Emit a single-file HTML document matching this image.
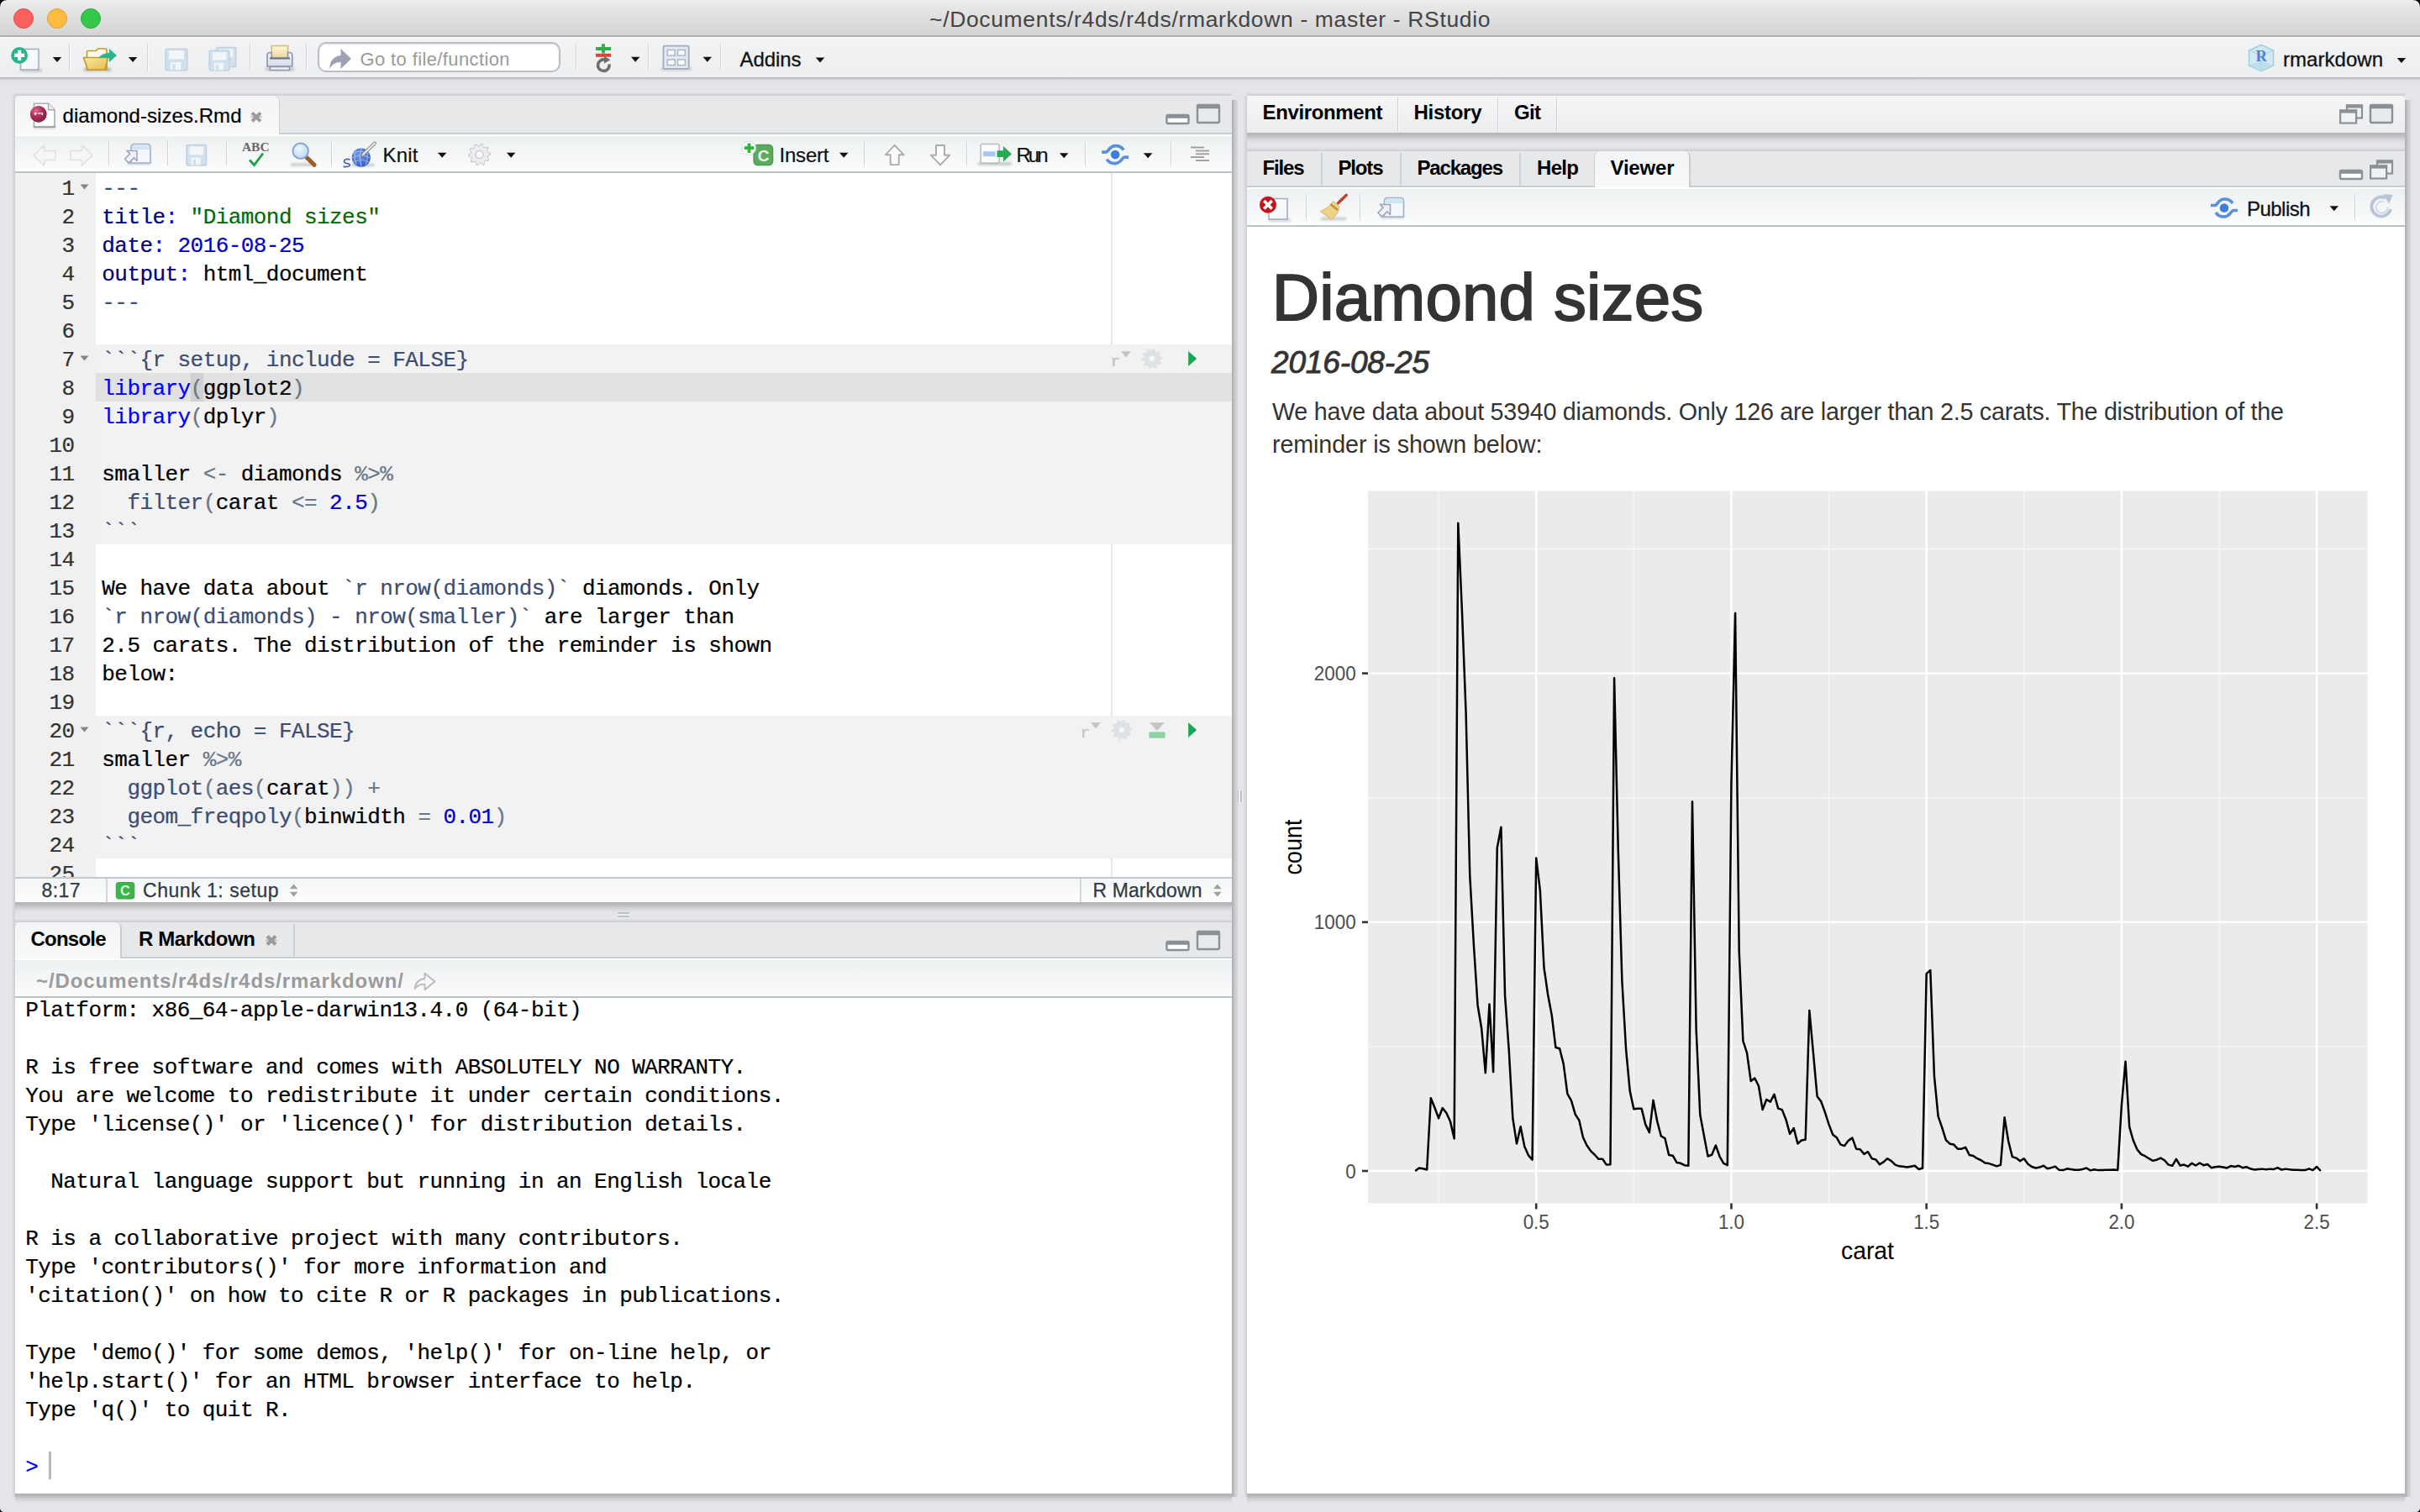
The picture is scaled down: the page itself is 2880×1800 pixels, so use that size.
<!DOCTYPE html>
<html><head><meta charset="utf-8"><title>RStudio</title>
<style>
html,body{margin:0;padding:0}
body{width:2880px;height:1800px;position:relative;overflow:hidden;background:#e4e5e9;font-family:"Liberation Sans",sans-serif;}
</style></head><body>
<div style="position:absolute;left:0px;top:0px;width:2880px;height:44px;background:linear-gradient(#ececec,#d3d3d3);border-bottom:2px solid #adadad;box-sizing:border-box;"></div>
<div style="position:absolute;left:16px;top:10px;width:24px;height:24px;border-radius:50%;background:#fc615d;border:1px solid #df4744;box-sizing:border-box;"></div>
<div style="position:absolute;left:56px;top:10px;width:24px;height:24px;border-radius:50%;background:#fdbc40;border:1px solid #de9f34;box-sizing:border-box;"></div>
<div style="position:absolute;left:96px;top:10px;width:24px;height:24px;border-radius:50%;background:#34c84a;border:1px solid #27aa35;box-sizing:border-box;"></div>
<div style="position:absolute;left:1106.00px;top:9.87px;font-family:'Liberation Sans', sans-serif;font-size:26.50px;line-height:1;color:#444;white-space:pre;letter-spacing:0.653px;">~/Documents/r4ds/r4ds/rmarkdown - master - RStudio</div>
<div style="position:absolute;left:0px;top:44px;width:2880px;height:48px;background:linear-gradient(#fafafa 0,#f1f3f4 2px,#eceeef 100%);"></div>
<div style="position:absolute;left:0px;top:92px;width:2880px;height:6px;background:linear-gradient(#b6b7ba 0,#bebfc2 20%,#d0d1d5 36%,#dadbdf 55%,#e1e2e6 80%,#e4e5e9 100%);"></div>
<div style="position:absolute;left:82px;top:52px;width:1px;height:32px;background:#d2d4d7;"></div>
<div style="position:absolute;left:83px;top:52px;width:1px;height:32px;background:#fbfbfc;"></div>
<div style="position:absolute;left:175px;top:52px;width:1px;height:32px;background:#d2d4d7;"></div>
<div style="position:absolute;left:176px;top:52px;width:1px;height:32px;background:#fbfbfc;"></div>
<div style="position:absolute;left:297px;top:52px;width:1px;height:32px;background:#d2d4d7;"></div>
<div style="position:absolute;left:298px;top:52px;width:1px;height:32px;background:#fbfbfc;"></div>
<div style="position:absolute;left:364px;top:52px;width:1px;height:32px;background:#d2d4d7;"></div>
<div style="position:absolute;left:365px;top:52px;width:1px;height:32px;background:#fbfbfc;"></div>
<div style="position:absolute;left:685px;top:52px;width:1px;height:32px;background:#d2d4d7;"></div>
<div style="position:absolute;left:686px;top:52px;width:1px;height:32px;background:#fbfbfc;"></div>
<div style="position:absolute;left:771px;top:52px;width:1px;height:32px;background:#d2d4d7;"></div>
<div style="position:absolute;left:772px;top:52px;width:1px;height:32px;background:#fbfbfc;"></div>
<div style="position:absolute;left:857px;top:52px;width:1px;height:32px;background:#d2d4d7;"></div>
<div style="position:absolute;left:858px;top:52px;width:1px;height:32px;background:#fbfbfc;"></div>
<div style="position:absolute;left:378px;top:50px;width:289px;height:36px;background:#fff;border:2px solid #babec6;border-radius:10px;box-sizing:border-box;box-shadow:inset 0 1px 2px rgba(0,0,0,.12);"></div>
<div style="position:absolute;left:428.50px;top:59.68px;font-family:'Liberation Sans', sans-serif;font-size:22.00px;line-height:1;color:#9a9a9a;white-space:pre;letter-spacing:0.377px;">Go to file/function</div>
<div style="position:absolute;left:1466px;top:119px;width:6.5px;height:1663px;background:linear-gradient(to right,#aeafb2 0,#bcbdc0 38%,#cbccd0 46%,#d3d4d8 92%,#e4e5e9 100%);"></div>
<div style="position:absolute;left:2862px;top:119px;width:6.5px;height:1663px;background:linear-gradient(to right,#aeafb2 0,#bcbdc0 38%,#cbccd0 46%,#d3d4d8 92%,#e4e5e9 100%);"></div>
<div style="position:absolute;left:14px;top:114px;width:4px;height:1668px;background:linear-gradient(to left,#cdced1 0,#d9dade 60%,#e4e5e9 100%);"></div>
<div style="position:absolute;left:1480px;top:114px;width:4px;height:1668px;background:linear-gradient(to left,#cdced1 0,#d9dade 60%,#e4e5e9 100%);"></div>
<div style="position:absolute;left:735px;top:1086px;width:14px;height:2px;background:#bec2cc;box-shadow:0 0 0 1px rgba(240,241,244,.6);"></div>
<div style="position:absolute;left:735px;top:1090px;width:14px;height:2px;background:#bec2cc;box-shadow:0 0 0 1px rgba(240,241,244,.6);"></div>
<div style="position:absolute;left:1472px;top:941px;width:2px;height:14px;background:#bec2cc;box-shadow:0 0 0 1px rgba(240,241,244,.6);"></div>
<div style="position:absolute;left:1476px;top:941px;width:2px;height:14px;background:#bec2cc;box-shadow:0 0 0 1px rgba(240,241,244,.6);"></div>
<div style="position:absolute;left:880.50px;top:58.98px;font-family:'Liberation Sans', sans-serif;font-size:24.00px;line-height:1;color:#111;white-space:pre;letter-spacing:-0.077px;-webkit-text-stroke:0.3px #111;">Addins</div>
<div style="position:absolute;left:2717.00px;top:58.98px;font-family:'Liberation Sans', sans-serif;font-size:24.00px;line-height:1;color:#111;white-space:pre;letter-spacing:0.037px;-webkit-text-stroke:0.3px #111;">rmarkdown</div>
<div style="position:absolute;left:1466px;top:119px;width:6.5px;height:955px;background:linear-gradient(to right,#aeafb2 0,#bcbdc0 38%,#cbccd0 46%,#d3d4d8 92%,#e4e5e9 100%);"></div>
<div style="position:absolute;left:18px;top:1074px;width:1448px;height:12px;background:linear-gradient(to bottom,#b2b2b4 0,#bbbcbe 28%,#cbccd0 48%,#d8d9dd 72%,#e4e5e9 100%);"></div>
<div style="position:absolute;left:14px;top:114px;width:4px;height:960px;background:linear-gradient(to left,#cdced1 0,#d9dade 60%,#e4e5e9 100%);"></div>
<div style="position:absolute;left:18px;top:110px;width:1448px;height:4px;background:linear-gradient(to top,#cbccd0 0,#d8d9dd 55%,#e4e5e9 100%);"></div>
<div style="position:absolute;left:18px;top:114px;width:1448px;height:960px;background:#fff;border-radius:6px 0 0 0;"></div>
<div style="position:absolute;left:18px;top:114px;width:1448px;height:46px;background:#e7e8ea;border-bottom:2px solid #c7cdd1;box-sizing:border-box;border-radius:6px 0 0 0;"></div>
<div style="position:absolute;left:18px;top:114px;width:315px;height:47px;background:linear-gradient(#f3f4f5,#f9f9fa);border-right:1px solid #c9ccd0;border-radius:7px 7px 0 0;box-sizing:border-box;"></div>
<div style="position:absolute;left:74.50px;top:126.18px;font-family:'Liberation Sans', sans-serif;font-size:24.00px;line-height:1;color:#000;white-space:pre;letter-spacing:0.058px;-webkit-text-stroke:0.22px #000;">diamond-sizes.Rmd</div>
<div style="position:absolute;left:18px;top:160px;width:1448px;height:44px;background:linear-gradient(#fff 0,#fff 2px,#edf0f1 2px,#f3f5f6 45%,#fbfcfc 100%);"></div>
<div style="position:absolute;left:18px;top:204px;width:1448px;height:2px;background:#bcc3c7;"></div>
<div style="position:absolute;left:129px;top:167px;width:1px;height:30px;background:#d0d3d6;"></div><div style="position:absolute;left:130px;top:167px;width:1px;height:30px;background:#fdfdfd;"></div>
<div style="position:absolute;left:199px;top:167px;width:1px;height:30px;background:#d0d3d6;"></div><div style="position:absolute;left:200px;top:167px;width:1px;height:30px;background:#fdfdfd;"></div>
<div style="position:absolute;left:269px;top:167px;width:1px;height:30px;background:#d0d3d6;"></div><div style="position:absolute;left:270px;top:167px;width:1px;height:30px;background:#fdfdfd;"></div>
<div style="position:absolute;left:394px;top:167px;width:1px;height:30px;background:#d0d3d6;"></div><div style="position:absolute;left:395px;top:167px;width:1px;height:30px;background:#fdfdfd;"></div>
<div style="position:absolute;left:1028px;top:167px;width:1px;height:30px;background:#d0d3d6;"></div><div style="position:absolute;left:1029px;top:167px;width:1px;height:30px;background:#fdfdfd;"></div>
<div style="position:absolute;left:1150px;top:167px;width:1px;height:30px;background:#d0d3d6;"></div><div style="position:absolute;left:1151px;top:167px;width:1px;height:30px;background:#fdfdfd;"></div>
<div style="position:absolute;left:1291px;top:167px;width:1px;height:30px;background:#d0d3d6;"></div><div style="position:absolute;left:1292px;top:167px;width:1px;height:30px;background:#fdfdfd;"></div>
<div style="position:absolute;left:1393px;top:167px;width:1px;height:30px;background:#d0d3d6;"></div><div style="position:absolute;left:1394px;top:167px;width:1px;height:30px;background:#fdfdfd;"></div>
<div style="position:absolute;left:455.50px;top:172.68px;font-family:'Liberation Sans', sans-serif;font-size:24.00px;line-height:1;color:#111;white-space:pre;letter-spacing:0.215px;-webkit-text-stroke:0.22px #111;">Knit</div>
<div style="position:absolute;left:927.50px;top:172.68px;font-family:'Liberation Sans', sans-serif;font-size:24.00px;line-height:1;color:#111;white-space:pre;letter-spacing:-0.205px;-webkit-text-stroke:0.22px #111;">Insert</div>
<div style="position:absolute;left:1209.50px;top:172.68px;font-family:'Liberation Sans', sans-serif;font-size:24.00px;line-height:1;color:#111;white-space:pre;letter-spacing:-3.014px;-webkit-text-stroke:0.22px #111;">Run</div>
<div style="position:absolute;left:18px;top:206px;width:96px;height:838px;background:#f0f0f0;"></div>
<div style="position:absolute;left:114px;top:410px;width:1352px;height:238px;background:#f2f2f2;"></div>
<div style="position:absolute;left:114px;top:852px;width:1352px;height:170px;background:#f2f2f2;"></div>
<div style="position:absolute;left:114px;top:444px;width:1352px;height:34px;background:#e1e1e1;"></div>
<div style="position:absolute;left:227px;top:444px;width:15px;height:34px;background:#d0d0d0;"></div>
<div style="position:absolute;left:1322px;top:206px;width:2px;height:204px;background:#e6e6e6;"></div>
<div style="position:absolute;left:1322px;top:648px;width:2px;height:204px;background:#e6e6e6;"></div>
<div style="position:absolute;left:1322px;top:1022px;width:2px;height:22px;background:#e6e6e6;"></div>
<div style="position:absolute;left:73.46px;top:212.07px;font-family:'Liberation Mono', monospace;font-size:26.00px;line-height:1;color:#333;white-space:pre;letter-spacing:-0.56px;-webkit-text-stroke:0.22px #333;">1</div>
<div style="position:absolute;left:121.30px;top:212.07px;font-family:'Liberation Mono', monospace;font-size:26.00px;line-height:1;color:#000;white-space:pre;letter-spacing:-0.56px;"><span style="color:#3c4c72;-webkit-text-stroke:0.22px #3c4c72">---</span></div>
<div style="position:absolute;left:73.46px;top:246.07px;font-family:'Liberation Mono', monospace;font-size:26.00px;line-height:1;color:#333;white-space:pre;letter-spacing:-0.56px;-webkit-text-stroke:0.22px #333;">2</div>
<div style="position:absolute;left:121.30px;top:246.07px;font-family:'Liberation Mono', monospace;font-size:26.00px;line-height:1;color:#000;white-space:pre;letter-spacing:-0.56px;"><span style="color:#00007d;-webkit-text-stroke:0.22px #00007d">title</span><span style="color:#0000ff;-webkit-text-stroke:0.22px #0000ff">:</span><span style="color:#000;-webkit-text-stroke:0.22px #000"> </span><span style="color:#036a07;-webkit-text-stroke:0.22px #036a07">"Diamond sizes"</span></div>
<div style="position:absolute;left:73.46px;top:280.07px;font-family:'Liberation Mono', monospace;font-size:26.00px;line-height:1;color:#333;white-space:pre;letter-spacing:-0.56px;-webkit-text-stroke:0.22px #333;">3</div>
<div style="position:absolute;left:121.30px;top:280.07px;font-family:'Liberation Mono', monospace;font-size:26.00px;line-height:1;color:#000;white-space:pre;letter-spacing:-0.56px;"><span style="color:#00007d;-webkit-text-stroke:0.22px #00007d">date</span><span style="color:#0000ff;-webkit-text-stroke:0.22px #0000ff">:</span><span style="color:#000;-webkit-text-stroke:0.22px #000"> </span><span style="color:#0000cd;-webkit-text-stroke:0.22px #0000cd">2016-08-25</span></div>
<div style="position:absolute;left:73.46px;top:314.07px;font-family:'Liberation Mono', monospace;font-size:26.00px;line-height:1;color:#333;white-space:pre;letter-spacing:-0.56px;-webkit-text-stroke:0.22px #333;">4</div>
<div style="position:absolute;left:121.30px;top:314.07px;font-family:'Liberation Mono', monospace;font-size:26.00px;line-height:1;color:#000;white-space:pre;letter-spacing:-0.56px;"><span style="color:#00007d;-webkit-text-stroke:0.22px #00007d">output</span><span style="color:#0000ff;-webkit-text-stroke:0.22px #0000ff">:</span><span style="color:#000;-webkit-text-stroke:0.22px #000"> html_document</span></div>
<div style="position:absolute;left:73.46px;top:348.07px;font-family:'Liberation Mono', monospace;font-size:26.00px;line-height:1;color:#333;white-space:pre;letter-spacing:-0.56px;-webkit-text-stroke:0.22px #333;">5</div>
<div style="position:absolute;left:121.30px;top:348.07px;font-family:'Liberation Mono', monospace;font-size:26.00px;line-height:1;color:#000;white-space:pre;letter-spacing:-0.56px;"><span style="color:#3c4c72;-webkit-text-stroke:0.22px #3c4c72">---</span></div>
<div style="position:absolute;left:73.46px;top:382.07px;font-family:'Liberation Mono', monospace;font-size:26.00px;line-height:1;color:#333;white-space:pre;letter-spacing:-0.56px;-webkit-text-stroke:0.22px #333;">6</div>
<div style="position:absolute;left:73.46px;top:416.07px;font-family:'Liberation Mono', monospace;font-size:26.00px;line-height:1;color:#333;white-space:pre;letter-spacing:-0.56px;-webkit-text-stroke:0.22px #333;">7</div>
<div style="position:absolute;left:121.30px;top:416.07px;font-family:'Liberation Mono', monospace;font-size:26.00px;line-height:1;color:#000;white-space:pre;letter-spacing:-0.56px;"><span style="color:#3c4c72;-webkit-text-stroke:0.22px #3c4c72">```{r setup, include = FALSE}</span></div>
<div style="position:absolute;left:73.46px;top:450.07px;font-family:'Liberation Mono', monospace;font-size:26.00px;line-height:1;color:#333;white-space:pre;letter-spacing:-0.56px;-webkit-text-stroke:0.22px #333;">8</div>
<div style="position:absolute;left:121.30px;top:450.07px;font-family:'Liberation Mono', monospace;font-size:26.00px;line-height:1;color:#000;white-space:pre;letter-spacing:-0.56px;"><span style="color:#0000ff;-webkit-text-stroke:0.22px #0000ff">library</span><span style="color:#687687;-webkit-text-stroke:0.22px #687687">(</span><span style="color:#000;-webkit-text-stroke:0.22px #000">ggplot2</span><span style="color:#687687;-webkit-text-stroke:0.22px #687687">)</span></div>
<div style="position:absolute;left:73.46px;top:484.07px;font-family:'Liberation Mono', monospace;font-size:26.00px;line-height:1;color:#333;white-space:pre;letter-spacing:-0.56px;-webkit-text-stroke:0.22px #333;">9</div>
<div style="position:absolute;left:121.30px;top:484.07px;font-family:'Liberation Mono', monospace;font-size:26.00px;line-height:1;color:#000;white-space:pre;letter-spacing:-0.56px;"><span style="color:#0000ff;-webkit-text-stroke:0.22px #0000ff">library</span><span style="color:#687687;-webkit-text-stroke:0.22px #687687">(</span><span style="color:#000;-webkit-text-stroke:0.22px #000">dplyr</span><span style="color:#687687;-webkit-text-stroke:0.22px #687687">)</span></div>
<div style="position:absolute;left:58.42px;top:518.07px;font-family:'Liberation Mono', monospace;font-size:26.00px;line-height:1;color:#333;white-space:pre;letter-spacing:-0.56px;-webkit-text-stroke:0.22px #333;">10</div>
<div style="position:absolute;left:58.42px;top:552.07px;font-family:'Liberation Mono', monospace;font-size:26.00px;line-height:1;color:#333;white-space:pre;letter-spacing:-0.56px;-webkit-text-stroke:0.22px #333;">11</div>
<div style="position:absolute;left:121.30px;top:552.07px;font-family:'Liberation Mono', monospace;font-size:26.00px;line-height:1;color:#000;white-space:pre;letter-spacing:-0.56px;"><span style="color:#000;-webkit-text-stroke:0.22px #000">smaller </span><span style="color:#687687;-webkit-text-stroke:0.22px #687687">&lt;-</span><span style="color:#000;-webkit-text-stroke:0.22px #000"> diamonds </span><span style="color:#687687;-webkit-text-stroke:0.22px #687687">%&gt;%</span></div>
<div style="position:absolute;left:58.42px;top:586.07px;font-family:'Liberation Mono', monospace;font-size:26.00px;line-height:1;color:#333;white-space:pre;letter-spacing:-0.56px;-webkit-text-stroke:0.22px #333;">12</div>
<div style="position:absolute;left:121.30px;top:586.07px;font-family:'Liberation Mono', monospace;font-size:26.00px;line-height:1;color:#000;white-space:pre;letter-spacing:-0.56px;"><span style="color:#000;-webkit-text-stroke:0.22px #000">  </span><span style="color:#3c4c72;-webkit-text-stroke:0.22px #3c4c72">filter</span><span style="color:#687687;-webkit-text-stroke:0.22px #687687">(</span><span style="color:#000;-webkit-text-stroke:0.22px #000">carat </span><span style="color:#687687;-webkit-text-stroke:0.22px #687687">&lt;=</span><span style="color:#000;-webkit-text-stroke:0.22px #000"> </span><span style="color:#0000cd;-webkit-text-stroke:0.22px #0000cd">2.5</span><span style="color:#687687;-webkit-text-stroke:0.22px #687687">)</span></div>
<div style="position:absolute;left:58.42px;top:620.07px;font-family:'Liberation Mono', monospace;font-size:26.00px;line-height:1;color:#333;white-space:pre;letter-spacing:-0.56px;-webkit-text-stroke:0.22px #333;">13</div>
<div style="position:absolute;left:121.30px;top:620.07px;font-family:'Liberation Mono', monospace;font-size:26.00px;line-height:1;color:#000;white-space:pre;letter-spacing:-0.56px;"><span style="color:#3c4c72;-webkit-text-stroke:0.22px #3c4c72">```</span></div>
<div style="position:absolute;left:58.42px;top:654.07px;font-family:'Liberation Mono', monospace;font-size:26.00px;line-height:1;color:#333;white-space:pre;letter-spacing:-0.56px;-webkit-text-stroke:0.22px #333;">14</div>
<div style="position:absolute;left:58.42px;top:688.07px;font-family:'Liberation Mono', monospace;font-size:26.00px;line-height:1;color:#333;white-space:pre;letter-spacing:-0.56px;-webkit-text-stroke:0.22px #333;">15</div>
<div style="position:absolute;left:121.30px;top:688.07px;font-family:'Liberation Mono', monospace;font-size:26.00px;line-height:1;color:#000;white-space:pre;letter-spacing:-0.56px;"><span style="color:#000;-webkit-text-stroke:0.22px #000">We have data about </span><span style="color:#3c4c72;-webkit-text-stroke:0.22px #3c4c72">`r nrow(diamonds)`</span><span style="color:#000;-webkit-text-stroke:0.22px #000"> diamonds. Only</span></div>
<div style="position:absolute;left:58.42px;top:722.07px;font-family:'Liberation Mono', monospace;font-size:26.00px;line-height:1;color:#333;white-space:pre;letter-spacing:-0.56px;-webkit-text-stroke:0.22px #333;">16</div>
<div style="position:absolute;left:121.30px;top:722.07px;font-family:'Liberation Mono', monospace;font-size:26.00px;line-height:1;color:#000;white-space:pre;letter-spacing:-0.56px;"><span style="color:#3c4c72;-webkit-text-stroke:0.22px #3c4c72">`r nrow(diamonds) - nrow(smaller)`</span><span style="color:#000;-webkit-text-stroke:0.22px #000"> are larger than</span></div>
<div style="position:absolute;left:58.42px;top:756.07px;font-family:'Liberation Mono', monospace;font-size:26.00px;line-height:1;color:#333;white-space:pre;letter-spacing:-0.56px;-webkit-text-stroke:0.22px #333;">17</div>
<div style="position:absolute;left:121.30px;top:756.07px;font-family:'Liberation Mono', monospace;font-size:26.00px;line-height:1;color:#000;white-space:pre;letter-spacing:-0.56px;"><span style="color:#000;-webkit-text-stroke:0.22px #000">2.5 carats. The distribution of the reminder is shown</span></div>
<div style="position:absolute;left:58.42px;top:790.07px;font-family:'Liberation Mono', monospace;font-size:26.00px;line-height:1;color:#333;white-space:pre;letter-spacing:-0.56px;-webkit-text-stroke:0.22px #333;">18</div>
<div style="position:absolute;left:121.30px;top:790.07px;font-family:'Liberation Mono', monospace;font-size:26.00px;line-height:1;color:#000;white-space:pre;letter-spacing:-0.56px;"><span style="color:#000;-webkit-text-stroke:0.22px #000">below:</span></div>
<div style="position:absolute;left:58.42px;top:824.07px;font-family:'Liberation Mono', monospace;font-size:26.00px;line-height:1;color:#333;white-space:pre;letter-spacing:-0.56px;-webkit-text-stroke:0.22px #333;">19</div>
<div style="position:absolute;left:58.42px;top:858.07px;font-family:'Liberation Mono', monospace;font-size:26.00px;line-height:1;color:#333;white-space:pre;letter-spacing:-0.56px;-webkit-text-stroke:0.22px #333;">20</div>
<div style="position:absolute;left:121.30px;top:858.07px;font-family:'Liberation Mono', monospace;font-size:26.00px;line-height:1;color:#000;white-space:pre;letter-spacing:-0.56px;"><span style="color:#3c4c72;-webkit-text-stroke:0.22px #3c4c72">```{r, echo = FALSE}</span></div>
<div style="position:absolute;left:58.42px;top:892.07px;font-family:'Liberation Mono', monospace;font-size:26.00px;line-height:1;color:#333;white-space:pre;letter-spacing:-0.56px;-webkit-text-stroke:0.22px #333;">21</div>
<div style="position:absolute;left:121.30px;top:892.07px;font-family:'Liberation Mono', monospace;font-size:26.00px;line-height:1;color:#000;white-space:pre;letter-spacing:-0.56px;"><span style="color:#000;-webkit-text-stroke:0.22px #000">smaller </span><span style="color:#687687;-webkit-text-stroke:0.22px #687687">%&gt;%</span></div>
<div style="position:absolute;left:58.42px;top:926.07px;font-family:'Liberation Mono', monospace;font-size:26.00px;line-height:1;color:#333;white-space:pre;letter-spacing:-0.56px;-webkit-text-stroke:0.22px #333;">22</div>
<div style="position:absolute;left:121.30px;top:926.07px;font-family:'Liberation Mono', monospace;font-size:26.00px;line-height:1;color:#000;white-space:pre;letter-spacing:-0.56px;"><span style="color:#000;-webkit-text-stroke:0.22px #000">  </span><span style="color:#3c4c72;-webkit-text-stroke:0.22px #3c4c72">ggplot</span><span style="color:#687687;-webkit-text-stroke:0.22px #687687">(</span><span style="color:#3c4c72;-webkit-text-stroke:0.22px #3c4c72">aes</span><span style="color:#687687;-webkit-text-stroke:0.22px #687687">(</span><span style="color:#000;-webkit-text-stroke:0.22px #000">carat</span><span style="color:#687687;-webkit-text-stroke:0.22px #687687">))</span><span style="color:#000;-webkit-text-stroke:0.22px #000"> </span><span style="color:#687687;-webkit-text-stroke:0.22px #687687">+</span></div>
<div style="position:absolute;left:58.42px;top:960.07px;font-family:'Liberation Mono', monospace;font-size:26.00px;line-height:1;color:#333;white-space:pre;letter-spacing:-0.56px;-webkit-text-stroke:0.22px #333;">23</div>
<div style="position:absolute;left:121.30px;top:960.07px;font-family:'Liberation Mono', monospace;font-size:26.00px;line-height:1;color:#000;white-space:pre;letter-spacing:-0.56px;"><span style="color:#000;-webkit-text-stroke:0.22px #000">  </span><span style="color:#3c4c72;-webkit-text-stroke:0.22px #3c4c72">geom_freqpoly</span><span style="color:#687687;-webkit-text-stroke:0.22px #687687">(</span><span style="color:#000;-webkit-text-stroke:0.22px #000">binwidth </span><span style="color:#687687;-webkit-text-stroke:0.22px #687687">=</span><span style="color:#000;-webkit-text-stroke:0.22px #000"> </span><span style="color:#0000cd;-webkit-text-stroke:0.22px #0000cd">0.01</span><span style="color:#687687;-webkit-text-stroke:0.22px #687687">)</span></div>
<div style="position:absolute;left:58.42px;top:994.07px;font-family:'Liberation Mono', monospace;font-size:26.00px;line-height:1;color:#333;white-space:pre;letter-spacing:-0.56px;-webkit-text-stroke:0.22px #333;">24</div>
<div style="position:absolute;left:121.30px;top:994.07px;font-family:'Liberation Mono', monospace;font-size:26.00px;line-height:1;color:#000;white-space:pre;letter-spacing:-0.56px;"><span style="color:#3c4c72;-webkit-text-stroke:0.22px #3c4c72">```</span></div>
<div style="position:absolute;left:58.42px;top:1028.07px;font-family:'Liberation Mono', monospace;font-size:26.00px;line-height:1;color:#333;white-space:pre;letter-spacing:-0.56px;-webkit-text-stroke:0.22px #333;">25</div>
<svg style="position:absolute;left:95px;top:219px;" width="12" height="8" viewBox="0 0 12 8"><path d="M0.5 0.5 L10.5 0.5 L5.5 6.5 Z" fill="#858585"/></svg>
<svg style="position:absolute;left:95px;top:423px;" width="12" height="8" viewBox="0 0 12 8"><path d="M0.5 0.5 L10.5 0.5 L5.5 6.5 Z" fill="#858585"/></svg>
<svg style="position:absolute;left:95px;top:865px;" width="12" height="8" viewBox="0 0 12 8"><path d="M0.5 0.5 L10.5 0.5 L5.5 6.5 Z" fill="#858585"/></svg>
<div style="position:absolute;left:18px;top:1044px;width:1448px;height:30px;background:linear-gradient(#f3f5f6,#fdfdfd);border-top:2px solid #c3cacf;box-sizing:border-box;"></div>
<div style="position:absolute;left:126px;top:1046px;width:2px;height:28px;background:#d3d8db;"></div>
<div style="position:absolute;left:1285px;top:1046px;width:2px;height:28px;background:#d3d8db;"></div>
<div style="position:absolute;left:49.50px;top:1048.53px;font-family:'Liberation Sans', sans-serif;font-size:23.00px;line-height:1;color:#2e3a45;white-space:pre;letter-spacing:0.412px;-webkit-text-stroke:0.25px #2e3a45;">8:17</div>
<div style="position:absolute;left:170.00px;top:1048.53px;font-family:'Liberation Sans', sans-serif;font-size:23.00px;line-height:1;color:#2e3a45;white-space:pre;letter-spacing:0.522px;-webkit-text-stroke:0.25px #2e3a45;">Chunk 1: setup</div>
<div style="position:absolute;left:1300.50px;top:1048.53px;font-family:'Liberation Sans', sans-serif;font-size:23.00px;line-height:1;color:#2e3a45;white-space:pre;letter-spacing:0.101px;-webkit-text-stroke:0.25px #2e3a45;">R Markdown</div>
<div style="position:absolute;left:1466px;top:1103px;width:6.5px;height:675px;background:linear-gradient(to right,#aeafb2 0,#bcbdc0 38%,#cbccd0 46%,#d3d4d8 92%,#e4e5e9 100%);"></div>
<div style="position:absolute;left:18px;top:1778px;width:1448px;height:12px;background:linear-gradient(to bottom,#b2b2b4 0,#bbbcbe 28%,#cbccd0 48%,#d8d9dd 72%,#e4e5e9 100%);"></div>
<div style="position:absolute;left:14px;top:1098px;width:4px;height:680px;background:linear-gradient(to left,#cdced1 0,#d9dade 60%,#e4e5e9 100%);"></div>
<div style="position:absolute;left:18px;top:1094px;width:1448px;height:4px;background:linear-gradient(to top,#cbccd0 0,#d8d9dd 55%,#e4e5e9 100%);"></div>
<div style="position:absolute;left:18px;top:1098px;width:1448px;height:680px;background:#fff;border-radius:6px 0 0 0;"></div>
<div style="position:absolute;left:18px;top:1098px;width:1448px;height:43px;background:#e7e8ea;border-bottom:2px solid #c7cdd1;box-sizing:border-box;border-radius:6px 0 0 0;"></div>
<div style="position:absolute;left:18px;top:1098px;width:127px;height:44px;background:linear-gradient(#f3f4f5,#f9f9fa);border-right:2px solid #c9ccd0;border-radius:7px 7px 0 0;box-sizing:border-box;"></div>
<div style="position:absolute;left:349px;top:1100px;width:2px;height:40px;background:#d0d3d6;"></div>
<div style="position:absolute;left:36.50px;top:1105.98px;font-family:'Liberation Sans', sans-serif;font-size:24.00px;line-height:1;color:#000;white-space:pre;letter-spacing:-0.779px;font-weight:700;">Console</div>
<div style="position:absolute;left:165.00px;top:1105.98px;font-family:'Liberation Sans', sans-serif;font-size:24.00px;line-height:1;color:#000;white-space:pre;letter-spacing:-0.408px;font-weight:700;">R Markdown</div>
<div style="position:absolute;left:18px;top:1141px;width:1448px;height:45px;background:linear-gradient(#fff 0,#fff 2px,#edf0f1 2px,#f3f5f6 45%,#fbfcfc 100%);"></div>
<div style="position:absolute;left:18px;top:1186px;width:1448px;height:2px;background:#bcc3c7;"></div>
<div style="position:absolute;left:43.00px;top:1156.48px;font-family:'Liberation Sans', sans-serif;font-size:24.00px;line-height:1;color:#9b9b9b;white-space:pre;letter-spacing:0.910px;font-weight:700;">~/Documents/r4ds/r4ds/rmarkdown/</div>
<div style="position:absolute;left:30.20px;top:1190.27px;font-family:'Liberation Mono', monospace;font-size:26.00px;line-height:1;color:#000;white-space:pre;letter-spacing:-0.56px;-webkit-text-stroke:0.22px #000;">Platform: x86_64-apple-darwin13.4.0 (64-bit)</div>
<div style="position:absolute;left:30.20px;top:1258.27px;font-family:'Liberation Mono', monospace;font-size:26.00px;line-height:1;color:#000;white-space:pre;letter-spacing:-0.56px;-webkit-text-stroke:0.22px #000;">R is free software and comes with ABSOLUTELY NO WARRANTY.</div>
<div style="position:absolute;left:30.20px;top:1292.27px;font-family:'Liberation Mono', monospace;font-size:26.00px;line-height:1;color:#000;white-space:pre;letter-spacing:-0.56px;-webkit-text-stroke:0.22px #000;">You are welcome to redistribute it under certain conditions.</div>
<div style="position:absolute;left:30.20px;top:1326.27px;font-family:'Liberation Mono', monospace;font-size:26.00px;line-height:1;color:#000;white-space:pre;letter-spacing:-0.56px;-webkit-text-stroke:0.22px #000;">Type 'license()' or 'licence()' for distribution details.</div>
<div style="position:absolute;left:30.20px;top:1394.27px;font-family:'Liberation Mono', monospace;font-size:26.00px;line-height:1;color:#000;white-space:pre;letter-spacing:-0.56px;-webkit-text-stroke:0.22px #000;">  Natural language support but running in an English locale</div>
<div style="position:absolute;left:30.20px;top:1462.27px;font-family:'Liberation Mono', monospace;font-size:26.00px;line-height:1;color:#000;white-space:pre;letter-spacing:-0.56px;-webkit-text-stroke:0.22px #000;">R is a collaborative project with many contributors.</div>
<div style="position:absolute;left:30.20px;top:1496.27px;font-family:'Liberation Mono', monospace;font-size:26.00px;line-height:1;color:#000;white-space:pre;letter-spacing:-0.56px;-webkit-text-stroke:0.22px #000;">Type 'contributors()' for more information and</div>
<div style="position:absolute;left:30.20px;top:1530.27px;font-family:'Liberation Mono', monospace;font-size:26.00px;line-height:1;color:#000;white-space:pre;letter-spacing:-0.56px;-webkit-text-stroke:0.22px #000;">'citation()' on how to cite R or R packages in publications.</div>
<div style="position:absolute;left:30.20px;top:1598.27px;font-family:'Liberation Mono', monospace;font-size:26.00px;line-height:1;color:#000;white-space:pre;letter-spacing:-0.56px;-webkit-text-stroke:0.22px #000;">Type 'demo()' for some demos, 'help()' for on-line help, or</div>
<div style="position:absolute;left:30.20px;top:1632.27px;font-family:'Liberation Mono', monospace;font-size:26.00px;line-height:1;color:#000;white-space:pre;letter-spacing:-0.56px;-webkit-text-stroke:0.22px #000;">'help.start()' for an HTML browser interface to help.</div>
<div style="position:absolute;left:30.20px;top:1666.27px;font-family:'Liberation Mono', monospace;font-size:26.00px;line-height:1;color:#000;white-space:pre;letter-spacing:-0.56px;-webkit-text-stroke:0.22px #000;">Type 'q()' to quit R.</div>
<div style="position:absolute;left:30.20px;top:1734.27px;font-family:'Liberation Mono', monospace;font-size:26.00px;line-height:1;color:#0000ff;white-space:pre;letter-spacing:-0.56px;-webkit-text-stroke:0.22px #00f;">&gt;</div>
<div style="position:absolute;left:58px;top:1728px;width:3px;height:33px;background:#b9b9b9;"></div>
<div style="position:absolute;left:2862px;top:119px;width:6.5px;height:38.5px;background:linear-gradient(to right,#aeafb2 0,#bcbdc0 38%,#cbccd0 46%,#d3d4d8 92%,#e4e5e9 100%);"></div>
<div style="position:absolute;left:1484px;top:157.5px;width:1378px;height:12px;background:linear-gradient(to bottom,#b2b2b4 0,#bbbcbe 28%,#cbccd0 48%,#d8d9dd 72%,#e4e5e9 100%);"></div>
<div style="position:absolute;left:1480px;top:114px;width:4px;height:43.5px;background:linear-gradient(to left,#cdced1 0,#d9dade 60%,#e4e5e9 100%);"></div>
<div style="position:absolute;left:1484px;top:110px;width:1378px;height:4px;background:linear-gradient(to top,#cbccd0 0,#d8d9dd 55%,#e4e5e9 100%);"></div>
<div style="position:absolute;left:1484px;top:114px;width:1378px;height:43.5px;background:#fff;border-radius:0 6px 0 0;"></div>
<div style="position:absolute;left:1484px;top:114px;width:1378px;height:43.5px;background:linear-gradient(#f6f6f7,#ebecee);border-radius:0 6px 0 0;"></div>
<div style="position:absolute;left:1663px;top:116px;width:1px;height:41px;background:#cfd1d5;"></div>
<div style="position:absolute;left:1664px;top:116px;width:1px;height:41px;background:#fafafa;"></div>
<div style="position:absolute;left:1782px;top:116px;width:1px;height:41px;background:#cfd1d5;"></div>
<div style="position:absolute;left:1783px;top:116px;width:1px;height:41px;background:#fafafa;"></div>
<div style="position:absolute;left:1852px;top:116px;width:1px;height:41px;background:#cfd1d5;"></div>
<div style="position:absolute;left:1853px;top:116px;width:1px;height:41px;background:#fafafa;"></div>
<div style="position:absolute;left:1502.50px;top:122.48px;font-family:'Liberation Sans', sans-serif;font-size:24.00px;line-height:1;color:#000;white-space:pre;letter-spacing:-0.368px;font-weight:700;">Environment</div>
<div style="position:absolute;left:1682.50px;top:122.48px;font-family:'Liberation Sans', sans-serif;font-size:24.00px;line-height:1;color:#000;white-space:pre;letter-spacing:-0.281px;font-weight:700;">History</div>
<div style="position:absolute;left:1802.00px;top:122.48px;font-family:'Liberation Sans', sans-serif;font-size:24.00px;line-height:1;color:#000;white-space:pre;letter-spacing:-0.664px;font-weight:700;">Git</div>
<div style="position:absolute;left:2862px;top:185px;width:6.5px;height:1593px;background:linear-gradient(to right,#aeafb2 0,#bcbdc0 38%,#cbccd0 46%,#d3d4d8 92%,#e4e5e9 100%);"></div>
<div style="position:absolute;left:1484px;top:1778px;width:1378px;height:12px;background:linear-gradient(to bottom,#b2b2b4 0,#bbbcbe 28%,#cbccd0 48%,#d8d9dd 72%,#e4e5e9 100%);"></div>
<div style="position:absolute;left:1480px;top:180px;width:4px;height:1598px;background:linear-gradient(to left,#cdced1 0,#d9dade 60%,#e4e5e9 100%);"></div>
<div style="position:absolute;left:1484px;top:176px;width:1378px;height:4px;background:linear-gradient(to top,#cbccd0 0,#d8d9dd 55%,#e4e5e9 100%);"></div>
<div style="position:absolute;left:1484px;top:180px;width:1378px;height:1598px;background:#fff;border-radius:0;"></div>
<div style="position:absolute;left:1484px;top:180px;width:1378px;height:43px;background:#e7e8ea;border-bottom:2px solid #c7cdd1;box-sizing:border-box;"></div>
<div style="position:absolute;left:1572px;top:182px;width:2px;height:40px;background:#d0d3d6;"></div>
<div style="position:absolute;left:1666px;top:182px;width:2px;height:40px;background:#d0d3d6;"></div>
<div style="position:absolute;left:1808px;top:182px;width:2px;height:40px;background:#d0d3d6;"></div>
<div style="position:absolute;left:1897px;top:180px;width:115px;height:44px;background:linear-gradient(#f3f4f5,#f9f9fa);border-left:1px solid #c9ccd0;border-right:2px solid #c9ccd0;border-radius:7px 7px 0 0;box-sizing:border-box;"></div>
<div style="position:absolute;left:1502.50px;top:188.08px;font-family:'Liberation Sans', sans-serif;font-size:24.00px;line-height:1;color:#000;white-space:pre;letter-spacing:-1.173px;font-weight:700;">Files</div>
<div style="position:absolute;left:1592.50px;top:188.08px;font-family:'Liberation Sans', sans-serif;font-size:24.00px;line-height:1;color:#000;white-space:pre;letter-spacing:-1.169px;font-weight:700;">Plots</div>
<div style="position:absolute;left:1686.50px;top:188.08px;font-family:'Liberation Sans', sans-serif;font-size:24.00px;line-height:1;color:#000;white-space:pre;letter-spacing:-1.179px;font-weight:700;">Packages</div>
<div style="position:absolute;left:1829.00px;top:188.08px;font-family:'Liberation Sans', sans-serif;font-size:24.00px;line-height:1;color:#000;white-space:pre;letter-spacing:-0.669px;font-weight:700;">Help</div>
<div style="position:absolute;left:1916.50px;top:188.08px;font-family:'Liberation Sans', sans-serif;font-size:24.00px;line-height:1;color:#000;white-space:pre;letter-spacing:-0.189px;font-weight:700;">Viewer</div>
<div style="position:absolute;left:1484px;top:223px;width:1378px;height:45px;background:linear-gradient(#fff 0,#fff 2px,#edf0f1 2px,#f3f5f6 45%,#fbfcfc 100%);"></div>
<div style="position:absolute;left:1484px;top:268px;width:1378px;height:2px;background:#bcc3c7;"></div>
<div style="position:absolute;left:1554px;top:231px;width:1px;height:30px;background:#d0d3d6;"></div><div style="position:absolute;left:1555px;top:231px;width:1px;height:30px;background:#fdfdfd;"></div>
<div style="position:absolute;left:1618px;top:231px;width:1px;height:30px;background:#d0d3d6;"></div><div style="position:absolute;left:1619px;top:231px;width:1px;height:30px;background:#fdfdfd;"></div>
<div style="position:absolute;left:2802px;top:231px;width:1px;height:30px;background:#d0d3d6;"></div><div style="position:absolute;left:2803px;top:231px;width:1px;height:30px;background:#fdfdfd;"></div>
<div style="position:absolute;left:2674.00px;top:236.88px;font-family:'Liberation Sans', sans-serif;font-size:24.00px;line-height:1;color:#111;white-space:pre;letter-spacing:-0.536px;-webkit-text-stroke:0.3px #111;">Publish</div>
<div style="position:absolute;left:1513.80px;top:314.57px;font-family:'Liberation Sans', sans-serif;font-size:78.00px;line-height:1;color:#333;white-space:pre;letter-spacing:0.164px;-webkit-text-stroke:1.8px #333;">Diamond sizes</div>
<div style="position:absolute;left:1513.00px;top:413.28px;font-family:'Liberation Sans', sans-serif;font-size:37.00px;line-height:1;color:#333;white-space:pre;letter-spacing:-0.141px;font-style:italic;-webkit-text-stroke:0.9px #333;">2016-08-25</div>
<div style="position:absolute;left:1514.00px;top:475.61px;font-family:'Liberation Sans', sans-serif;font-size:28.70px;line-height:1;color:#333;white-space:pre;letter-spacing:-0.244px;">We have data about 53940 diamonds. Only 126 are larger than 2.5 carats. The distribution of the</div>
<div style="position:absolute;left:1514.00px;top:515.41px;font-family:'Liberation Sans', sans-serif;font-size:28.70px;line-height:1;color:#333;white-space:pre;letter-spacing:-0.101px;">reminder is shown below:</div>
<svg style="position:absolute;left:0;top:0" width="2880" height="1800" viewBox="0 0 2880 1800" font-family="Liberation Sans, sans-serif"><rect x="1628" y="584.5" width="1189.5" height="848" fill="#ebebeb"/><line x1="1712.09" x2="1712.09" y1="584.5" y2="1432.5" stroke="#f7f7f7" stroke-width="1.4"/><line x1="1944.31" x2="1944.31" y1="584.5" y2="1432.5" stroke="#f7f7f7" stroke-width="1.4"/><line x1="2176.54" x2="2176.54" y1="584.5" y2="1432.5" stroke="#f7f7f7" stroke-width="1.4"/><line x1="2408.76" x2="2408.76" y1="584.5" y2="1432.5" stroke="#f7f7f7" stroke-width="1.4"/><line x1="2640.99" x2="2640.99" y1="584.5" y2="1432.5" stroke="#f7f7f7" stroke-width="1.4"/><line x1="1628" x2="2817.5" y1="1245.90" y2="1245.90" stroke="#f7f7f7" stroke-width="1.4"/><line x1="1628" x2="2817.5" y1="949.70" y2="949.70" stroke="#f7f7f7" stroke-width="1.4"/><line x1="1628" x2="2817.5" y1="653.50" y2="653.50" stroke="#f7f7f7" stroke-width="1.4"/><line x1="1828.20" x2="1828.20" y1="584.5" y2="1432.5" stroke="#fff" stroke-width="2.4"/><line x1="1828.20" x2="1828.20" y1="1432.5" y2="1439.5" stroke="#333" stroke-width="2.6"/><text x="1812.70" y="1463.2" font-size="23.4" fill="#4d4d4d" textLength="31" lengthAdjust="spacingAndGlyphs">0.5</text><line x1="2060.43" x2="2060.43" y1="584.5" y2="1432.5" stroke="#fff" stroke-width="2.4"/><line x1="2060.43" x2="2060.43" y1="1432.5" y2="1439.5" stroke="#333" stroke-width="2.6"/><text x="2044.93" y="1463.2" font-size="23.4" fill="#4d4d4d" textLength="31" lengthAdjust="spacingAndGlyphs">1.0</text><line x1="2292.65" x2="2292.65" y1="584.5" y2="1432.5" stroke="#fff" stroke-width="2.4"/><line x1="2292.65" x2="2292.65" y1="1432.5" y2="1439.5" stroke="#333" stroke-width="2.6"/><text x="2277.15" y="1463.2" font-size="23.4" fill="#4d4d4d" textLength="31" lengthAdjust="spacingAndGlyphs">1.5</text><line x1="2524.88" x2="2524.88" y1="584.5" y2="1432.5" stroke="#fff" stroke-width="2.4"/><line x1="2524.88" x2="2524.88" y1="1432.5" y2="1439.5" stroke="#333" stroke-width="2.6"/><text x="2509.38" y="1463.2" font-size="23.4" fill="#4d4d4d" textLength="31" lengthAdjust="spacingAndGlyphs">2.0</text><line x1="2757.10" x2="2757.10" y1="584.5" y2="1432.5" stroke="#fff" stroke-width="2.4"/><line x1="2757.10" x2="2757.10" y1="1432.5" y2="1439.5" stroke="#333" stroke-width="2.6"/><text x="2741.60" y="1463.2" font-size="23.4" fill="#4d4d4d" textLength="31" lengthAdjust="spacingAndGlyphs">2.5</text><line x1="1628" x2="2817.5" y1="1394.00" y2="1394.00" stroke="#fff" stroke-width="2.4"/><line x1="1621" x2="1628" y1="1394.00" y2="1394.00" stroke="#333" stroke-width="2.6"/><text x="1601.30" y="1402.60" font-size="23.4" fill="#4d4d4d" textLength="12.5" lengthAdjust="spacingAndGlyphs">0</text><line x1="1628" x2="2817.5" y1="1097.80" y2="1097.80" stroke="#fff" stroke-width="2.4"/><line x1="1621" x2="1628" y1="1097.80" y2="1097.80" stroke="#333" stroke-width="2.6"/><text x="1563.80" y="1106.40" font-size="23.4" fill="#4d4d4d" textLength="50" lengthAdjust="spacingAndGlyphs">1000</text><line x1="1628" x2="2817.5" y1="801.60" y2="801.60" stroke="#fff" stroke-width="2.4"/><line x1="1621" x2="1628" y1="801.60" y2="801.60" stroke="#333" stroke-width="2.6"/><text x="1563.80" y="810.20" font-size="23.4" fill="#4d4d4d" textLength="50" lengthAdjust="spacingAndGlyphs">2000</text><polyline points="1684.22,1394.00 1688.87,1390.45 1693.51,1391.33 1698.15,1392.52 1702.80,1307.21 1707.44,1318.77 1712.09,1331.21 1716.73,1319.06 1721.38,1324.99 1726.02,1335.35 1730.67,1355.49 1735.31,622.70 1739.95,727.85 1744.60,848.99 1749.24,1041.82 1753.89,1124.46 1758.53,1196.43 1763.18,1224.57 1767.82,1277.30 1772.47,1195.55 1777.11,1276.11 1781.76,1009.24 1786.40,984.65 1791.04,1184.88 1795.69,1249.45 1800.33,1331.21 1804.98,1361.42 1809.62,1341.28 1814.27,1364.68 1818.91,1375.34 1823.56,1380.67 1828.20,1021.38 1832.84,1060.18 1837.49,1152.00 1842.13,1183.99 1846.78,1208.88 1851.42,1247.08 1856.07,1248.27 1860.71,1266.63 1865.36,1302.18 1870.00,1310.47 1874.64,1326.47 1879.29,1333.58 1883.93,1354.01 1888.58,1363.79 1893.22,1370.30 1897.87,1374.75 1902.51,1379.78 1907.16,1379.78 1911.80,1386.60 1916.45,1386.30 1921.09,807.23 1925.73,1010.72 1930.38,1167.70 1935.02,1248.27 1939.67,1298.62 1944.31,1320.25 1948.96,1319.65 1953.60,1319.65 1958.25,1338.61 1962.89,1348.09 1967.54,1309.88 1972.18,1334.76 1976.82,1352.53 1981.47,1355.20 1986.11,1375.04 1990.76,1375.64 1995.40,1383.93 2000.05,1384.82 2004.69,1387.19 2009.34,1387.78 2013.98,954.14 2018.62,1225.17 2023.27,1327.06 2027.91,1351.94 2032.56,1376.52 2037.20,1374.75 2041.85,1363.49 2046.49,1376.52 2051.14,1384.82 2055.78,1387.19 2060.43,932.52 2065.07,729.92 2069.71,1132.46 2074.36,1239.09 2079.00,1253.31 2083.65,1287.07 2088.29,1283.52 2092.94,1292.70 2097.58,1321.13 2102.23,1308.99 2106.87,1311.66 2111.51,1302.77 2116.16,1319.65 2120.80,1321.13 2125.45,1332.69 2130.09,1349.87 2134.74,1343.05 2139.38,1361.42 2144.03,1357.57 2148.67,1356.68 2153.32,1202.95 2157.96,1253.90 2162.60,1305.14 2167.25,1311.36 2171.89,1324.10 2176.54,1338.61 2181.18,1350.75 2185.83,1354.31 2190.47,1362.60 2195.12,1364.08 2199.76,1357.86 2204.40,1354.61 2209.05,1367.64 2213.69,1368.23 2218.34,1373.86 2222.98,1371.19 2227.63,1379.19 2232.27,1380.37 2236.92,1386.30 2241.56,1383.34 2246.20,1379.19 2250.85,1382.15 2255.49,1386.60 2260.14,1388.37 2264.78,1388.67 2269.43,1389.56 2274.07,1388.67 2278.72,1387.78 2283.36,1391.93 2288.01,1390.74 2292.65,1159.11 2297.29,1154.97 2301.94,1281.15 2306.58,1328.84 2311.23,1342.46 2315.87,1357.27 2320.52,1361.71 2325.16,1362.60 2329.81,1367.64 2334.45,1367.64 2339.10,1365.86 2343.74,1375.04 2348.38,1375.93 2353.03,1379.19 2357.67,1381.26 2362.32,1384.52 2366.96,1385.11 2371.61,1386.60 2376.25,1388.37 2380.90,1386.89 2385.54,1330.32 2390.18,1358.75 2394.83,1377.12 2399.47,1378.60 2404.12,1382.15 2408.76,1379.19 2413.41,1385.71 2418.05,1388.96 2422.70,1390.45 2427.34,1389.56 2431.99,1387.78 2436.63,1391.33 2441.27,1390.15 2445.92,1388.67 2450.56,1392.82 2455.21,1393.11 2459.85,1391.33 2464.50,1391.93 2469.14,1392.82 2473.79,1392.82 2478.43,1391.93 2483.07,1390.45 2487.72,1393.41 2492.36,1392.22 2497.01,1393.11 2501.65,1393.11 2506.30,1392.82 2510.94,1392.82 2515.59,1392.52 2520.23,1393.11 2524.88,1315.51 2529.52,1263.67 2534.16,1341.57 2538.81,1357.86 2543.45,1368.53 2548.10,1374.15 2552.74,1376.23 2557.39,1379.19 2562.03,1381.86 2566.68,1380.67 2571.32,1378.60 2575.96,1381.26 2580.61,1386.60 2585.25,1387.78 2589.90,1379.78 2594.54,1387.48 2599.19,1386.60 2603.83,1388.67 2608.48,1384.82 2613.12,1387.48 2617.77,1384.52 2622.41,1387.19 2627.05,1386.00 2631.70,1390.15 2636.34,1389.26 2640.99,1388.67 2645.63,1389.56 2650.28,1390.45 2654.92,1388.08 2659.57,1388.96 2664.21,1387.78 2668.85,1390.15 2673.50,1389.26 2678.14,1391.33 2682.79,1392.52 2687.43,1391.93 2692.08,1391.63 2696.72,1392.22 2701.37,1391.63 2706.01,1391.93 2710.65,1390.15 2715.30,1392.52 2719.94,1391.63 2724.59,1392.22 2729.23,1392.82 2733.88,1392.82 2738.52,1393.11 2743.17,1393.11 2747.81,1391.33 2752.46,1393.11 2757.10,1388.96 2761.74,1394.00" fill="none" stroke="#000" stroke-width="2.5" stroke-linejoin="round" stroke-linecap="butt"/><text x="2191" y="1499.3" font-size="29.6" fill="#000" textLength="63" lengthAdjust="spacingAndGlyphs">carat</text><text transform="translate(1548.5,1008.5) rotate(-90)" font-size="29.6" fill="#000" textLength="66" lengthAdjust="spacingAndGlyphs" x="-33">count</text></svg>
<svg style="position:absolute;left:0;top:0" width="2880" height="1800" viewBox="0 0 2880 1800"><defs>
<filter id="blur1" x="-20%" y="-100%" width="140%" height="300%"><feGaussianBlur stdDeviation="1.4"/></filter>
<linearGradient id="gpage" x1="0" y1="0" x2="1" y2="1"><stop offset="0" stop-color="#fff"/><stop offset="1" stop-color="#eff3f8"/></linearGradient>
<linearGradient id="gfold" x1="0" y1="0" x2="1" y2="1"><stop offset="0" stop-color="#f8eaa5"/><stop offset="1" stop-color="#e9bb4e"/></linearGradient>
<radialGradient id="gred" cx=".35" cy=".3" r=".8"><stop offset="0" stop-color="#d76a8e"/><stop offset=".5" stop-color="#a82c58"/><stop offset="1" stop-color="#7d1b3d"/></radialGradient>
<radialGradient id="glens" cx=".4" cy=".35" r=".7"><stop offset="0" stop-color="#eef6fd"/><stop offset="1" stop-color="#b9d6f3"/></radialGradient>
<radialGradient id="gyarn" cx=".4" cy=".35" r=".75"><stop offset="0" stop-color="#6f97e8"/><stop offset="1" stop-color="#2f58b8"/></radialGradient>
<linearGradient id="gprn" x1="0" y1="0" x2="0" y2="1"><stop offset="0" stop-color="#f4f6fa"/><stop offset="1" stop-color="#d5dbe6"/></linearGradient>
<linearGradient id="gpaper" x1="0" y1="0" x2="0" y2="1"><stop offset="0" stop-color="#fff6d8"/><stop offset="1" stop-color="#ecd59c"/></linearGradient>
</defs><rect x="22.5" y="80.0" width="25.5" height="3.0" fill="#000" opacity=".18" transform="translate(2,2.5)" filter="url(#blur1)"/><rect x="24.5" y="58.5" width="21.5" height="24.5" fill="url(#gpage)" stroke="#a4b0c2" stroke-width="1.6"/><circle cx="23.1" cy="65.9" r="9.9" fill="#2bb38c"/><path d="M17 65.9 h12.2 M23.1 59.8 v12.2" stroke="#fff" stroke-width="4.2"/><path d="M62.8 68.0 h10.4 l-5.2 6.0 Z" fill="#111"/><path d="M152.9 68.0 h10.4 l-5.2 6.0 Z" fill="#111"/><rect x="100" y="81" width="32" height="3.5" fill="#000" opacity=".25" filter="url(#blur1)"/><path d="M103.5 83 V62 q0 -1.5 1.5 -1.5 h9 l2.5 -2.5 h9 q1.5 0 1.5 1.5 V83 Z" fill="#fdfbf2" stroke="#c99a22" stroke-width="1.7"/><path d="M99.5 68.5 h22.5 l6.5 0 l-3.5 14.5 h-20.5 Z" fill="url(#gfold)" stroke="#c99a22" stroke-width="1.7" stroke-linejoin="round"/><path d="M117.5 69.5 q3 -6.5 12.5 -6.5 v-5 l9 8 l-9 8 v-5 q-6 -1 -12.5 0.5 Z" fill="#2bb58f"/><rect x="197.0" y="58.2" width="25.8" height="25.5" rx="1.5" fill="#cfe0ee" stroke="#c5d0dc" stroke-width="1.5"/><rect x="200.9" y="60.2" width="18.1" height="10.2" fill="#f3f5f7"/><rect x="202.9" y="74.0" width="12.4" height="9.2" fill="#f3f5f7"/><rect x="205.5" y="76.3" width="3.4" height="6.9" fill="#cfe0ee"/><rect x="257.5" y="56.5" width="23.3" height="23.0" rx="1.5" fill="#cfe0ee" stroke="#c5d0dc" stroke-width="1.5"/><rect x="261.0" y="58.5" width="16.3" height="9.2" fill="#f3f5f7"/><rect x="262.9" y="70.8" width="11.2" height="8.3" fill="#f3f5f7"/><rect x="265.2" y="72.8" width="3.0" height="6.2" fill="#cfe0ee"/><rect x="249.2" y="60.2" width="23.8" height="23.5" rx="1.5" fill="#cfe0ee" stroke="#c5d0dc" stroke-width="1.5"/><rect x="252.8" y="62.2" width="16.7" height="9.4" fill="#f3f5f7"/><rect x="254.7" y="74.8" width="11.4" height="8.5" fill="#f3f5f7"/><rect x="257.1" y="76.9" width="3.1" height="6.3" fill="#cfe0ee"/><rect x="316" y="80.5" width="34" height="3.5" fill="#000" opacity=".2" filter="url(#blur1)"/><rect x="323.2" y="54.5" width="19.4" height="15" fill="url(#gpaper)" stroke="#d6bb82" stroke-width="1.6"/><path d="M318 66 q0 -3.5 3.5 -3.5 h1.7 v7 h19.4 v-7 h1.7 q3.5 0 3.5 3.5 v13 h-29.8 Z" fill="url(#gprn)" stroke="#8f98aa" stroke-width="1.7"/><rect x="321" y="68.3" width="24" height="2.2" fill="#6f788c"/><rect x="321.5" y="79.5" width="23" height="4" fill="#eef0f4" stroke="#8f98aa" stroke-width="1.5"/><path d="M392 81.5 q1 -14 13.5 -15.5 v-8 l12.5 12 l-12.5 12 v-8 q-8 -0.5 -13.5 7.5 Z" fill="#9da3b4"/><path d="M709 58 h18 M718 52.2 v11.4" stroke="#2fae4a" stroke-width="3.8"/><rect x="709" y="63.8" width="18" height="4" fill="#d8453c"/><path d="M725 76.5 a6.8 6.8 0 1 1 -4.5 -5.2" fill="none" stroke="#6e6e6e" stroke-width="3.6"/><path d="M719 66.8 l7.5 4.4 l-7.5 4.2 Z" fill="#6e6e6e"/><path d="M751.0 67.8 h10.4 l-5.2 6.0 Z" fill="#111"/><path d="M836.6 67.8 h10.4 l-5.2 6.0 Z" fill="#111"/><path d="M970.8 68.5 h10.4 l-5.2 6.0 Z" fill="#111"/><path d="M2852.7 69.0 h10.4 l-5.2 6.0 Z" fill="#111"/><rect x="787" y="80.5" width="36" height="3" fill="#000" opacity=".18" filter="url(#blur1)"/><rect x="789.5" y="54.7" width="30.2" height="27.2" rx="1.5" fill="#e4e9f1" stroke="#9facc2" stroke-width="1.8"/><rect x="794.2" y="59.5" width="9" height="6.6" fill="#fbfcfd" stroke="#a7b3c7" stroke-width="1.4"/><rect x="794.2" y="71.0" width="9" height="6.6" fill="#fbfcfd" stroke="#a7b3c7" stroke-width="1.4"/><rect x="806.5" y="59.5" width="9" height="6.6" fill="#fbfcfd" stroke="#a7b3c7" stroke-width="1.4"/><rect x="806.5" y="71.0" width="9" height="6.6" fill="#fbfcfd" stroke="#a7b3c7" stroke-width="1.4"/><path d="M2691 53.5 l14.5 6.5 v18 l-14.5 6.5 l-14.5 -6.5 v-18 Z" fill="#d3e9f2" stroke="#9fd0dd" stroke-width="1.5" stroke-linejoin="round"/><path d="M2676.5 60 l14.5 5.5 l14.5 -5.5 M2691 65.5 v19" fill="none" stroke="#a9d6e2" stroke-width="1.3" opacity=".9"/><path d="M2676.5 78 l14.5 -6 l14.5 6 l-14.5 6.5 Z" fill="#b8dbe8" opacity=".8"/><text x="2691.3" y="72.6" text-anchor="middle" font-family="Liberation Serif, serif" font-weight="700" font-size="18.5" fill="#4a80d8">R</text><path d="M40.5 123.3 h17 l7.5 7.5 v20.3 h-24.5 Z" fill="#fff" stroke="#a9acb2" stroke-width="1.6"/><path d="M57.5 123.3 v7.5 h7.5" fill="#eceef1" stroke="#a9acb2" stroke-width="1.4"/><rect x="40" y="150.5" width="26" height="2.5" fill="#000" opacity=".2" filter="url(#blur1)"/><circle cx="45.8" cy="135.8" r="9.9" fill="url(#gred)"/><path d="M40.8 135 h3.2 m1.6 0 h3.2 m-7 2 v-3 m8.5 3 v-3" stroke="#fff" stroke-width="1.5" opacity=".9"/><path d="M300.0 134.3 l10 10 M310.0 134.3 l-10 10" stroke="#9b9b9b" stroke-width="4" fill="none"/><path d="M298.0 139.3 h14" stroke="#9b9b9b" stroke-width="1.6" opacity=".55"/><path d="M318.0 1114.5 l10 10 M328.0 1114.5 l-10 10" stroke="#9b9b9b" stroke-width="4" fill="none"/><path d="M316.0 1119.5 h14" stroke="#9b9b9b" stroke-width="1.6" opacity=".55"/><path d="M40 185 l12.5 -12 v6.5 h13.5 v11 h-13.5 v6.5 Z" fill="#f6f6f7" stroke="#dedfe1" stroke-width="1.5" stroke-linejoin="round"/><path d="M110 185 l-12.5 -12 v6.5 h-13.5 v11 h13.5 v6.5 Z" fill="#f6f6f7" stroke="#dedfe1" stroke-width="1.5" stroke-linejoin="round"/><rect x="152.0" y="192.5" width="27" height="3" fill="#000" opacity=".22" filter="url(#blur1)"/><path d="M156.0 175.5 q0 -4 4 -4 h15 q4 0 4 4 v18.5 h-23 Z" fill="#f4f7fb" stroke="#9fb1c9" stroke-width="1.6"/><path d="M156.8 175.9 q0 -3 3 -3 h15.4 q3 0 3 3 v2.2 h-21.4 Z" fill="#cfe5f8"/><path d="M151.0 179.5 h12 v12 l-3.6 -3.6 l-6.2 6.2 l-4.8 -4.8 l6.2 -6.2 Z" fill="#eef0f4" stroke="#98a5b8" stroke-width="1.5" stroke-linejoin="round"/><rect x="222.0" y="172.5" width="23.5" height="24.5" rx="1.5" fill="#cfe0ee" stroke="#c5d0dc" stroke-width="1.5"/><rect x="225.5" y="174.5" width="16.4" height="9.8" fill="#f3f5f7"/><rect x="227.4" y="187.7" width="11.3" height="8.8" fill="#f3f5f7"/><rect x="229.8" y="189.9" width="3.1" height="6.6" fill="#cfe0ee"/><text x="288" y="180.3" font-family="Liberation Serif, serif" font-weight="700" font-size="14" fill="#686868" textLength="32.5" lengthAdjust="spacingAndGlyphs">ABC</text><path d="M297 190.5 l5.5 6 l10.5 -14" fill="none" stroke="#1f9e4f" stroke-width="2.8"/><rect x="346" y="194.5" width="30" height="3" fill="#000" opacity=".22" filter="url(#blur1)"/><path d="M364 186.5 l10 9.8" stroke="#9c5b26" stroke-width="5" stroke-linecap="round"/><circle cx="357.7" cy="179.8" r="9.2" fill="url(#glens)" stroke="#8aa5c6" stroke-width="2"/><rect x="418" y="195" width="28" height="3" fill="#000" opacity=".2" filter="url(#blur1)"/><circle cx="429.8" cy="187.6" r="11.1" fill="url(#gyarn)"/><path d="M420.5 183 q9 -6 19 0 M419.3 188 q10.5 -6 21 0 M420.5 193 q9 -5 18.5 0 M424 179 q-4 8 0 17 M430 176.8 q-3 10 0 21 M436 178.5 q3 9 -1 18" fill="none" stroke="#a9c4f5" stroke-width="1.2" opacity=".8"/><path d="M416.5 189.8 q-6.5 -1.2 -7 2 q0 2.6 3.8 2.8 q3.6 0.4 2.8 2.6 q-1 1.8 -7.6 1.2" fill="none" stroke="#4060c4" stroke-width="1.7"/><path d="M431.5 184.5 L446 170.5" stroke="#8c8c8c" stroke-width="4" stroke-linecap="round"/><path d="M431.8 184.2 L446 170.5" stroke="#f4f4f4" stroke-width="1.8" stroke-linecap="round"/><path d="M521.0 181.8 h10.4 l-5.2 6.0 Z" fill="#111"/><path d="M603.0 181.8 h10.4 l-5.2 6.0 Z" fill="#111"/><path d="M999.0 181.8 h10.4 l-5.2 6.0 Z" fill="#111"/><path d="M1261.0 182.3 h10.4 l-5.2 6.0 Z" fill="#111"/><path d="M1361.0 182.3 h10.4 l-5.2 6.0 Z" fill="#111"/><g opacity="1"><polygon points="583.84,181.90 584.00,184.00 581.19,185.68 580.80,187.31 582.54,190.08 581.44,191.88 578.18,191.58 576.90,192.67 576.68,195.94 574.74,196.74 572.28,194.59 570.60,194.72 568.50,197.24 566.46,196.74 565.73,193.55 564.30,192.67 561.12,193.48 559.76,191.88 561.05,188.87 560.40,187.31 557.36,186.10 557.20,184.00 560.01,182.32 560.40,180.69 558.66,177.92 559.76,176.12 563.02,176.42 564.30,175.33 564.52,172.06 566.46,171.26 568.92,173.41 570.60,173.28 572.70,170.76 574.74,171.26 575.47,174.45 576.90,175.33 580.08,174.52 581.44,176.12 580.15,179.13 580.80,180.69" fill="#c6c8cb"/><circle cx="570.6" cy="184.0" r="3.6" fill="#c6c8cb"/></g><g opacity="1"><polygon points="582.35,182.14 582.50,184.00 580.00,185.49 579.65,186.94 581.20,189.40 580.23,190.99 577.33,190.73 576.20,191.70 576.00,194.60 574.28,195.32 572.09,193.40 570.60,193.52 568.74,195.75 566.92,195.32 566.28,192.48 565.00,191.70 562.19,192.41 560.97,190.99 562.12,188.32 561.55,186.94 558.85,185.86 558.70,184.00 561.20,182.51 561.55,181.06 560.00,178.60 560.97,177.01 563.87,177.27 565.00,176.30 565.20,173.40 566.92,172.68 569.11,174.60 570.60,174.48 572.46,172.25 574.28,172.68 574.92,175.52 576.20,176.30 579.01,175.59 580.23,177.01 579.08,179.68 579.65,181.06" fill="#ecedef"/><circle cx="570.6" cy="184.0" r="3.2" fill="#ecedef"/></g><circle cx="570.6" cy="184" r="4.6" fill="#f6f7f8" stroke="#c6c8cb" stroke-width="1.4"/><rect x="897.2" y="172.5" width="22.3" height="24" rx="4.5" fill="#5dac5d" stroke="#4d9a50" stroke-width="1.6"/><text x="908.6" y="191.5" text-anchor="middle" font-family="Liberation Sans, sans-serif" font-weight="700" font-size="19" fill="#f3f8f3">C</text><circle cx="891.3" cy="176.3" r="8.2" fill="#fbfbfb" stroke="#dcdddf" stroke-width="1"/><path d="M885.8 176.2 h11.4 M891.5 170.5 v11.4" stroke="#2db33a" stroke-width="3.7"/><path d="M1064.7 172.8 l11 11.5 h-6 v11.8 h-10 v-11.8 h-6 Z" fill="#fdfdfd" stroke="#a9abad" stroke-width="1.9" stroke-linejoin="round"/><path d="M1119 196.3 l11 -11.5 h-6 v-11.8 h-10 v11.8 h-6 Z" fill="#fdfdfd" stroke="#a9abad" stroke-width="1.9" stroke-linejoin="round"/><rect x="1164" y="193.5" width="40" height="3" fill="#000" opacity=".25" filter="url(#blur1)"/><rect x="1167.2" y="171.5" width="22" height="22.6" rx="2" fill="#fdfdfe" stroke="#b9bdc4" stroke-width="1.6"/><rect x="1170" y="180.2" width="14.5" height="6" fill="#a9c9f1"/><path d="M1186.5 179.3 h7.5 v-5.3 l10 9.2 l-10 9.2 v-5.3 h-7.5 Z" fill="#2aa853"/><g transform="translate(1327.2,184.1) scale(1)" fill="none" stroke="#3d7fd6" stroke-width="3.6" stroke-linecap="butt"><circle cx="0" cy="0" r="5.3" fill="#3d7fd6" stroke="none"/><path d="M-16 -3 h5 c3 0 3.5 -7.5 11.5 -7.5 c5 0 8 2.5 9.5 5" opacity=".85"/><path d="M16 3 h-5 c-3 0 -3.5 7.5 -11.5 7.5 c-5 0 -8 -2.5 -9.5 -5" opacity=".85"/></g><rect x="1417.0" y="174.6" width="16" height="1.8" fill="#9b9b9b"/><rect x="1423.0" y="178.6" width="16" height="1.8" fill="#9b9b9b"/><rect x="1423.0" y="182.4" width="16" height="1.8" fill="#9b9b9b"/><rect x="1417.0" y="186.2" width="16" height="1.8" fill="#9b9b9b"/><rect x="1423.0" y="190.2" width="16" height="1.8" fill="#9b9b9b"/><rect x="1388.5" y="137.0" width="26" height="10" rx="1.5" fill="#fff" stroke="#8b9095" stroke-width="2.4"/><rect x="1388.5" y="136.2" width="26" height="4.6" rx="1.5" fill="#8b9095"/><rect x="1425.0" y="125.0" width="26" height="21" rx="1.5" fill="#e9eaec" stroke="#8b9095" stroke-width="2.4"/><rect x="1425.0" y="124.2" width="26" height="5" rx="1.5" fill="#8b9095"/><rect x="1388.5" y="1121.0" width="26" height="10" rx="1.5" fill="#fff" stroke="#8b9095" stroke-width="2.4"/><rect x="1388.5" y="1120.2" width="26" height="4.6" rx="1.5" fill="#8b9095"/><rect x="1425.0" y="1109.0" width="26" height="21" rx="1.5" fill="#e9eaec" stroke="#8b9095" stroke-width="2.4"/><rect x="1425.0" y="1108.2" width="26" height="5" rx="1.5" fill="#8b9095"/><rect x="2793.0" y="125.5" width="18" height="15" fill="#f1f2f3" stroke="#8d9195" stroke-width="2.2"/><rect x="2791.9" y="124.4" width="20.2" height="4.2" fill="#8d9195"/><rect x="2785.1" y="131.5" width="19" height="15" fill="#f1f2f3" stroke="#8d9195" stroke-width="2.2"/><rect x="2784.0" y="130.4" width="21.2" height="4.2" fill="#8d9195"/><rect x="2821.0" y="125.0" width="26" height="21" rx="1.5" fill="#e9eaec" stroke="#8b9095" stroke-width="2.4"/><rect x="2821.0" y="124.2" width="26" height="5" rx="1.5" fill="#8b9095"/><rect x="2785.0" y="203.0" width="26" height="10" rx="1.5" fill="#fff" stroke="#8b9095" stroke-width="2.4"/><rect x="2785.0" y="202.2" width="26" height="4.6" rx="1.5" fill="#8b9095"/><rect x="2829.0" y="191.5" width="18" height="15" fill="#f1f2f3" stroke="#8d9195" stroke-width="2.2"/><rect x="2827.9" y="190.4" width="20.2" height="4.2" fill="#8d9195"/><rect x="2821.1" y="197.5" width="19" height="15" fill="#f1f2f3" stroke="#8d9195" stroke-width="2.2"/><rect x="2820.0" y="196.4" width="21.2" height="4.2" fill="#8d9195"/><text x="1321.8" y="435.5" font-family="Liberation Mono, monospace" font-size="19" fill="#c3c4c9" stroke="#c3c4c9" stroke-width=".5">r</text><path d="M1334.2 418.2 h11.6 l-5.8 7.2 Z" fill="#c3c3c3"/><g opacity="1"><polygon points="1383.15,425.06 1383.30,427.00 1380.70,428.55 1380.33,430.07 1381.95,432.63 1380.93,434.29 1377.91,434.01 1376.73,435.03 1376.53,438.05 1374.73,438.79 1372.45,436.80 1370.90,436.92 1368.96,439.25 1367.07,438.79 1366.40,435.84 1365.07,435.03 1362.13,435.77 1360.87,434.29 1362.06,431.50 1361.47,430.07 1358.65,428.94 1358.50,427.00 1361.10,425.45 1361.47,423.93 1359.85,421.37 1360.87,419.71 1363.89,419.99 1365.07,418.97 1365.27,415.95 1367.07,415.21 1369.35,417.20 1370.90,417.08 1372.84,414.75 1374.73,415.21 1375.40,418.16 1376.73,418.97 1379.67,418.23 1380.93,419.71 1379.74,422.50 1380.33,423.93" fill="#dee2e4"/><circle cx="1370.9" cy="427.0" r="3.3" fill="#f6f6f6"/></g><path d="M1414.2 418.0 l10 9 l-10 9 Z" fill="#1aa652"/><text x="1285.8" y="877.5" font-family="Liberation Mono, monospace" font-size="19" fill="#c3c4c9" stroke="#c3c4c9" stroke-width=".5">r</text><path d="M1298.2 860.2 h11.6 l-5.8 7.2 Z" fill="#c3c3c3"/><g opacity="1"><polygon points="1347.15,867.06 1347.30,869.00 1344.70,870.55 1344.33,872.07 1345.95,874.63 1344.93,876.29 1341.91,876.01 1340.73,877.03 1340.53,880.05 1338.73,880.79 1336.45,878.80 1334.90,878.92 1332.96,881.25 1331.07,880.79 1330.40,877.84 1329.07,877.03 1326.13,877.77 1324.87,876.29 1326.06,873.50 1325.47,872.07 1322.65,870.94 1322.50,869.00 1325.10,867.45 1325.47,865.93 1323.85,863.37 1324.87,861.71 1327.89,861.99 1329.07,860.97 1329.27,857.95 1331.07,857.21 1333.35,859.20 1334.90,859.08 1336.84,856.75 1338.73,857.21 1339.40,860.16 1340.73,860.97 1343.67,860.23 1344.93,861.71 1343.74,864.50 1344.33,865.93" fill="#dee2e4"/><circle cx="1334.9" cy="869.0" r="3.3" fill="#f6f6f6"/></g><path d="M1414.2 860.0 l10 9 l-10 9 Z" fill="#1aa652"/><path d="M1368 860.2 h18 l-9 9.6 Z" fill="#c3c3c3"/><rect x="1368" y="872" width="18" height="6" fill="#90d3a5" stroke="#84cb9a" stroke-width="1"/><rect x="138.3" y="1050.5" width="21.5" height="19.5" rx="3" fill="#3db54a" stroke="#35a442" stroke-width="1"/><text x="149" y="1066.3" text-anchor="middle" font-family="Liberation Sans, sans-serif" font-weight="700" font-size="16.5" fill="#d8f0da">C</text><path d="M344.8 1058.3 h9.6 l-4.8 -5.8 Z M344.8 1061.7 h9.6 l-4.8 5.8 Z" fill="#9da2a7"/><path d="M1444.0 1058.3 h9.6 l-4.8 -5.8 Z M1444.0 1061.7 h9.6 l-4.8 5.8 Z" fill="#9da2a7"/><path d="M493.5 1177 q1.5 -11 12 -12 v-6.3 l12 9.8 l-12 9.8 v-6.3 q-7.5 -0.5 -12 5 Z" fill="#f7f7f8" stroke="#b7b9be" stroke-width="1.8" stroke-linejoin="round"/><rect x="1508.0" y="258.0" width="26.0" height="3.0" fill="#000" opacity=".18" transform="translate(2,2.5)" filter="url(#blur1)"/><rect x="1510.0" y="236.5" width="22.0" height="24.5" fill="url(#gpage)" stroke="#a4b0c2" stroke-width="1.6"/><circle cx="1509" cy="243.8" r="10" fill="#c1161d"/><path d="M1504.3 239.1 l9.4 9.4 M1513.7 239.1 l-9.4 9.4" stroke="#fff" stroke-width="3.6"/><rect x="1572" y="259" width="30" height="3" fill="#000" opacity=".22" filter="url(#blur1)"/><path d="M1592.5 241.8 L1602.3 232.3" stroke="#c2402f" stroke-width="3.4" stroke-linecap="round"/><path d="M1586.5 239.5 l7.5 6.5 q-1 9 -9.5 15.5 l-13.5 -10 q10 -3.5 15.5 -12 Z" fill="#ecd38a" stroke="#d9b968" stroke-width="1"/><path d="M1583.5 243 l8.5 7" stroke="#cf8a3a" stroke-width="2.6"/><rect x="1643.5" y="256.5" width="27" height="3" fill="#000" opacity=".22" filter="url(#blur1)"/><path d="M1647.5 239.5 q0 -4 4 -4 h15 q4 0 4 4 v18.5 h-23 Z" fill="#f4f7fb" stroke="#9fb1c9" stroke-width="1.6"/><path d="M1648.3 239.9 q0 -3 3 -3 h15.4 q3 0 3 3 v2.2 h-21.4 Z" fill="#cfe5f8"/><path d="M1642.5 243.5 h12 v12 l-3.6 -3.6 l-6.2 6.2 l-4.8 -4.8 l6.2 -6.2 Z" fill="#eef0f4" stroke="#98a5b8" stroke-width="1.5" stroke-linejoin="round"/><g transform="translate(2647.0,247.5) scale(1)" fill="none" stroke="#3d7fd6" stroke-width="3.6" stroke-linecap="butt"><circle cx="0" cy="0" r="5.3" fill="#3d7fd6" stroke="none"/><path d="M-16 -3 h5 c3 0 3.5 -7.5 11.5 -7.5 c5 0 8 2.5 9.5 5" opacity=".85"/><path d="M16 3 h-5 c-3 0 -3.5 7.5 -11.5 7.5 c-5 0 -8 -2.5 -9.5 -5" opacity=".85"/></g><path d="M2772.6 245.3 h10.4 l-5.2 6.0 Z" fill="#111"/><path d="M2845 249 a11.5 11.5 0 1 1 -6.5 -13.5" fill="none" stroke="#b9c4d6" stroke-width="3.8"/><path d="M2836 231 l11.5 1 l-4.5 10.5 Z" fill="#b9c4d6"/><path d="M2841.5 246 a7 7 0 1 1 -5 -6" fill="none" stroke="#d3dae6" stroke-width="2"/><path d="M0 0 h9 q-9 0 -9 9 Z" fill="#000"/><path d="M2880 0 h-9 q9 0 9 9 Z" fill="#000"/><path d="M0 1800 v-5 q0 5 5 5 Z" fill="#000"/><path d="M2880 1800 v-5 q0 5 -5 5 Z" fill="#000"/></svg>
</body></html>
